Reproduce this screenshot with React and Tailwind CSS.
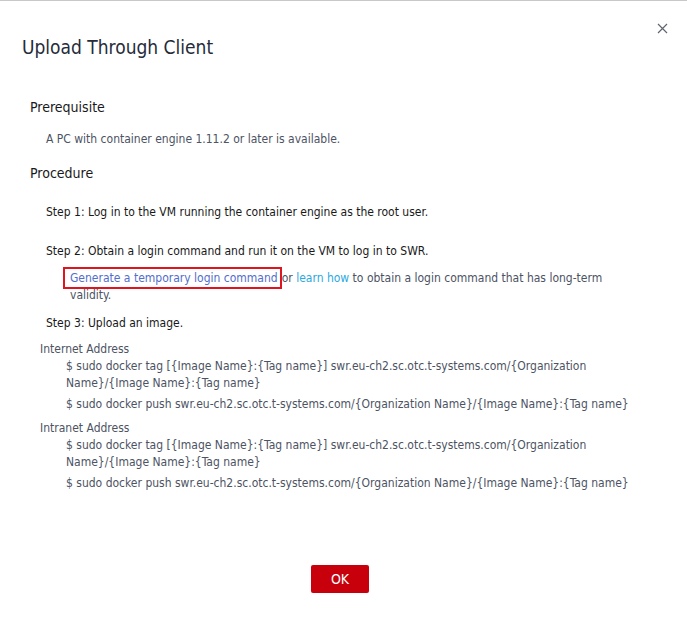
import React from 'react';

const TAG = '$ sudo docker tag [{Image Name}:{Tag name}] swr.eu-ch2.sc.otc.t-systems.com/{Organization Name}/{Image Name}:{Tag name}';
const PUSH = '$ sudo docker push swr.eu-ch2.sc.otc.t-systems.com/{Organization Name}/{Image Name}:{Tag name}';

const Cmd = ({ text }) => (
  <p className="pl-[26px] leading-[17px] mb-[4px]">{text}</p>
);

export default function App() {
  return (
    <div className="w-[687px] h-[623px] bg-white border-t border-[#c8c8c8] relative text-[#252b3a] font-['Liberation_Sans_Narrow','DejaVu_Sans_Condensed','Liberation_Sans',sans-serif]">
      {/* close */}
      <button className="absolute right-[18px] top-[20px] w-[14px] h-[14px] flex items-center justify-center">
        <svg width="11" height="11" viewBox="0 0 11 11" fill="none" stroke="#5f6570" strokeWidth="1.2">
          <path d="M1 1L10 10M10 1L1 10" />
        </svg>
      </button>

      {/* header */}
      <div className="pl-[22px] pt-[34px]">
        <h1 className="text-[19px] leading-[24px] text-[#252b3a]">Upload Through Client</h1>
      </div>

      {/* body */}
      <div className="pl-[30px] pr-[20px] pt-[39px] text-[12px]">
        <h2 className="text-[14px] leading-[18px] text-[#191919]">Prerequisite</h2>
        <p className="pl-[16px] mt-[15px] leading-[16px] text-[#4c5363]">
          A PC with container engine 1.11.2 or later is available.
        </p>

        <h2 className="text-[14px] leading-[18px] text-[#191919] mt-[17px]">Procedure</h2>

        <div className="pl-[16px] text-[#191919]">
          <p className="mt-[22px] leading-[16px]">
            Step 1: Log in to the VM running the container engine as the root user.
          </p>
          <p className="mt-[23px] leading-[16px]">
            Step 2: Obtain a login command and run it on the VM to log in to SWR.
          </p>
          <p className="mt-[11px] pl-[24px] pr-[40px] leading-[17px] text-[#4c5363]">
            <span className="border-2 border-[#e0141e] pl-[5px] pr-[2px] py-[2px] -ml-[7px] text-[#526ecc]">
              Generate a temporary login command
            </span>
            or <span className="text-[#2ca9e1]">learn how</span> to obtain a login command that has long-term validity.
          </p>
          <p className="mt-[11px] leading-[16px]">Step 3: Upload an image.</p>
        </div>

        <div className="mt-[10px] pl-[10px] text-[#4c5363]">
          <p className="leading-[17px]">Internet Address</p>
          <Cmd text={TAG} />
          <Cmd text={PUSH} />
          <p className="leading-[17px] mt-[7px]">Intranet Address</p>
          <Cmd text={TAG} />
          <Cmd text={PUSH} />
        </div>
      </div>

      {/* footer */}
      <div className="absolute left-0 right-0 top-[564px] flex justify-center">
        <button className="w-[58px] h-[28px] -ml-[7px] bg-[#c7000b] text-white text-[14px] rounded-[2px]">OK</button>
      </div>
    </div>
  );
}
